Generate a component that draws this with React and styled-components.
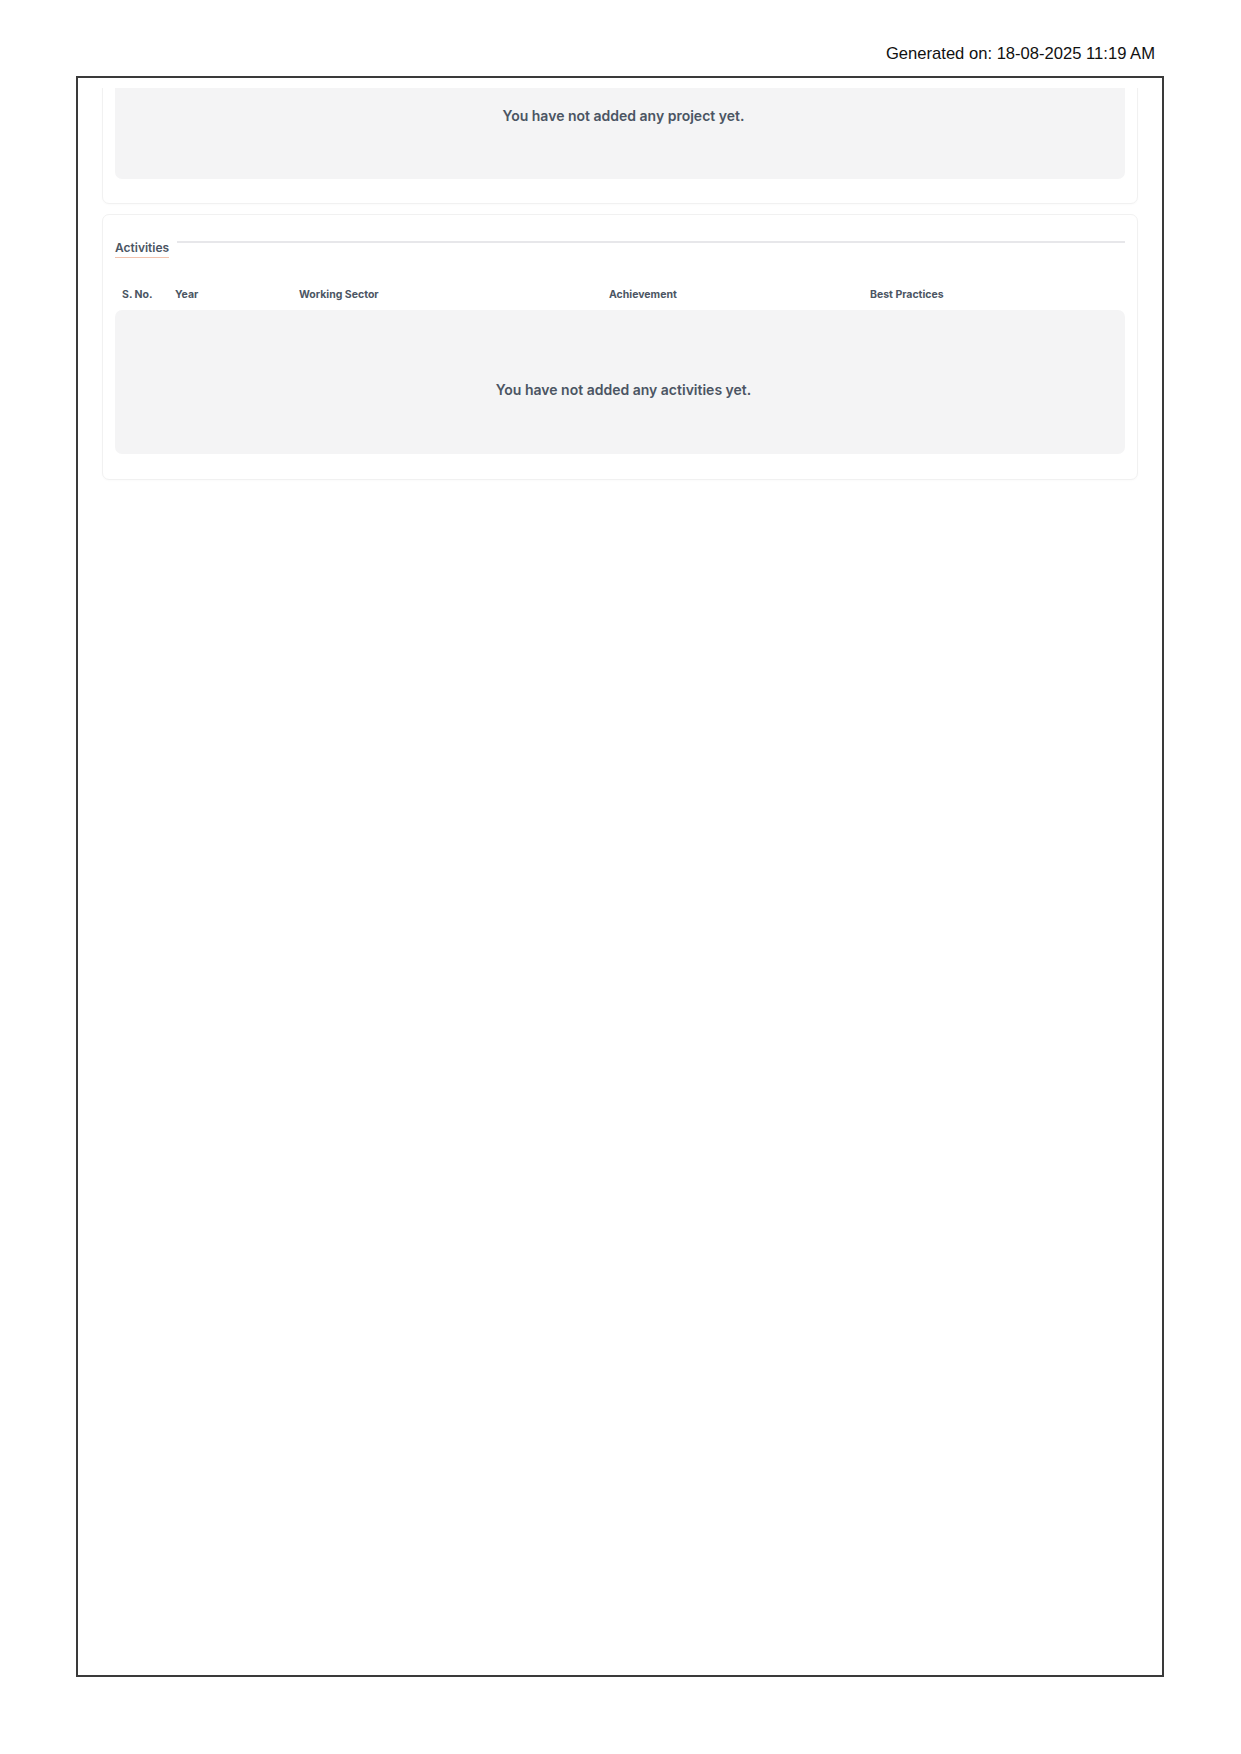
import React from "react";
import styled, { createGlobalStyle } from "styled-components";

const GlobalStyle = createGlobalStyle`
  html, body {
    margin: 0;
    padding: 0;
    background: #ffffff;
  }
  body {
    font-family: Inter, "Noto Sans", sans-serif;
  }
`;

const columns = [
  { key: "sno", label: "S. No." },
  { key: "year", label: "Year" },
  { key: "sector", label: "Working Sector" },
  { key: "achievement", label: "Achievement" },
  { key: "practices", label: "Best Practices" },
];

export default function App() {
  return (
    <>
      <GlobalStyle />
      <Page>
        <Stamp>Generated on: 18-08-2025 11:19 AM</Stamp>
        <Frame>
          <Clip>
            <Card $clipped>
              <EmptyBox $top="64px" $bottom="53px">
                You have not added any project yet.
              </EmptyBox>
            </Card>
            <Card>
              <TitleRow>
                <Title>Activities</Title>
                <Rule />
              </TitleRow>
              <HeadRow>
                {columns.map((c) => (
                  <HeadCell key={c.key}>{c.label}</HeadCell>
                ))}
              </HeadRow>
              <EmptyBox $top="69px" $bottom="54px">
                You have not added any activities yet.
              </EmptyBox>
            </Card>
          </Clip>
        </Frame>
      </Page>
    </>
  );
}

const Page = styled.div`
  width: 1241px;
  min-height: 1754px;
  padding-top: 43px;
  box-sizing: border-box;
`;

const Stamp = styled.div`
  width: 1155px;
  text-align: right;
  font-family: "Liberation Sans", Arial, sans-serif;
  font-size: 16.6px;
  line-height: 21px;
  color: #111;
  margin-bottom: 12px;
`;

const Frame = styled.div`
  margin-left: 76px;
  width: 1088px;
  height: 1601px;
  border: 2px solid #3a3a3a;
  box-sizing: border-box;
  padding-top: 10px;
`;

const Clip = styled.div`
  height: 100%;
  overflow: hidden;
  padding: 0 24px;
  display: flex;
  flex-direction: column;
  gap: 10px;
`;

const Card = styled.section`
  border: 1px solid #f1f1f1;
  border-radius: 7px;
  box-shadow: 0 1px 2px rgba(0, 0, 0, 0.02);
  padding: 24px 12px 25px;
  margin-top: ${(p) => (p.$clipped ? "-60px" : "0")};
  ${(p) => p.$clipped && "padding-top: 12px; padding-bottom: 24px;"}
`;

const TitleRow = styled.div`
  display: flex;
  align-items: flex-start;
`;

const Title = styled.h3`
  margin: 0;
  font-size: 12px;
  font-weight: 600;
  line-height: 17px;
  color: #4b5563;
  padding-bottom: 1px;
  border-bottom: 1.5px solid #f2c2ad;
`;

const Rule = styled.div`
  flex: 1;
  height: 2px;
  margin: 2px 0 0 8px;
  background: #e7e7ea;
`;

const HeadRow = styled.div`
  display: grid;
  grid-template-columns: 53px 124px 310px 261px 1fr;
  margin-top: 29px;
  margin-bottom: 7px;
`;

const HeadCell = styled.div`
  padding-left: 7px;
  font-size: 10.5px;
  font-weight: 700;
  line-height: 16px;
  color: #4b5563;
`;

const EmptyBox = styled.div`
  background: #f4f4f5;
  border-radius: 7px;
  text-align: center;
  font-size: 14px;
  font-weight: 600;
  line-height: 21px;
  color: #4b5563;
  padding-left: 7px;
  padding-top: ${(p) => p.$top};
  padding-bottom: ${(p) => p.$bottom};
`;
